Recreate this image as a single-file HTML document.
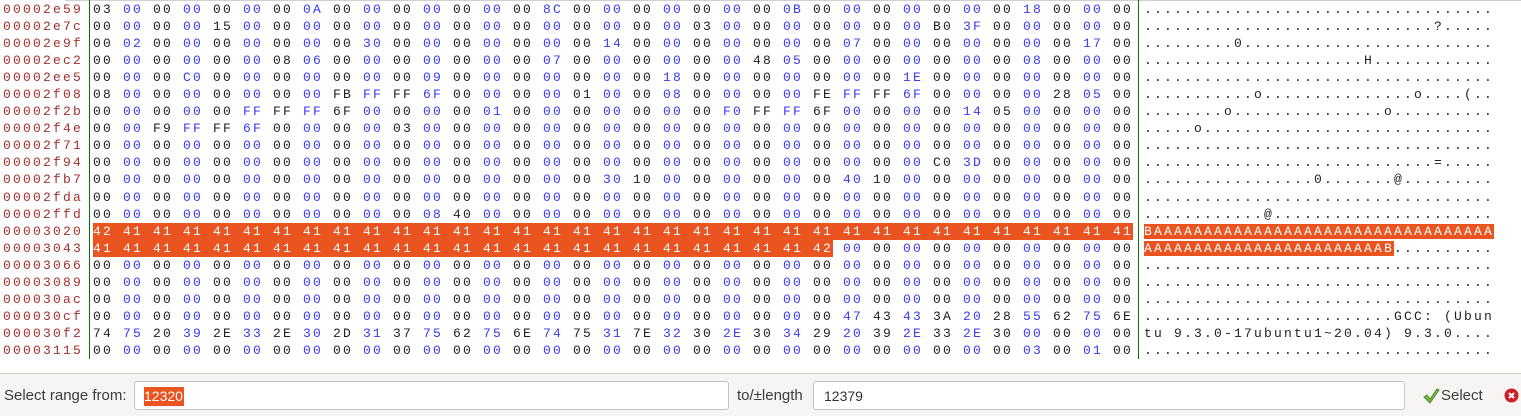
<!DOCTYPE html>
<html><head><meta charset="utf-8"><style>
html,body{margin:0;padding:0;background:#fff;width:1521px;height:416px;overflow:hidden;position:relative;font-family:"Liberation Sans",sans-serif}
.mono{position:absolute;top:1px;font:13px "Liberation Mono",monospace;letter-spacing:2.2px;line-height:17.05px}
.mono div{height:17.05px;white-space:nowrap}
.ad{left:3px;color:#a3302c}
.hx{left:93px}
.hx s,.hx u{text-decoration:none;display:inline-block;width:30px;color:#1e1e1e}
.hx div>:nth-child(even){color:#3a3af0}
u{text-decoration:none;background:#e95420;color:#fff!important}
.hx u.l{width:20px}
.as{left:1144px;color:#222}
.vl{position:absolute;top:0;width:1px;height:359px;background:#0a6e0a}
.top{position:absolute;top:0;left:65px;right:0;height:1px;background:#d0d0d0}
.bot{position:absolute;left:0;top:373px;width:1521px;height:43px;background:#f6f5f4;border-top:1px solid #cfcac6}
.lbl{position:absolute;top:387px;font-size:15px;color:#3c3c3c}
.inp{position:absolute;top:381px;height:29px;background:#fff;border:1px solid #c8c3be;border-radius:3px;box-sizing:border-box}
.iv{position:absolute;top:388px;font-size:14px;color:#333;line-height:16px}
</style></head><body>
<div class="top"></div>
<div class="vl" style="left:89px"></div>
<div class="vl" style="left:1138px"></div>
<div class="mono ad"><div>00002e59</div><div>00002e7c</div><div>00002e9f</div><div>00002ec2</div><div>00002ee5</div><div>00002f08</div><div>00002f2b</div><div>00002f4e</div><div>00002f71</div><div>00002f94</div><div>00002fb7</div><div>00002fda</div><div>00002ffd</div><div>00003020</div><div>00003043</div><div>00003066</div><div>00003089</div><div>000030ac</div><div>000030cf</div><div>000030f2</div><div>00003115</div></div>
<div class="mono hx">
<div><s>03</s><s>00</s><s>00</s><s>00</s><s>00</s><s>00</s><s>00</s><s>0A</s><s>00</s><s>00</s><s>00</s><s>00</s><s>00</s><s>00</s><s>00</s><s>8C</s><s>00</s><s>00</s><s>00</s><s>00</s><s>00</s><s>00</s><s>00</s><s>0B</s><s>00</s><s>00</s><s>00</s><s>00</s><s>00</s><s>00</s><s>00</s><s>18</s><s>00</s><s>00</s><s>00</s></div>
<div><s>00</s><s>00</s><s>00</s><s>00</s><s>15</s><s>00</s><s>00</s><s>00</s><s>00</s><s>00</s><s>00</s><s>00</s><s>00</s><s>00</s><s>00</s><s>00</s><s>00</s><s>00</s><s>00</s><s>00</s><s>03</s><s>00</s><s>00</s><s>00</s><s>00</s><s>00</s><s>00</s><s>00</s><s>B0</s><s>3F</s><s>00</s><s>00</s><s>00</s><s>00</s><s>00</s></div>
<div><s>00</s><s>02</s><s>00</s><s>00</s><s>00</s><s>00</s><s>00</s><s>00</s><s>00</s><s>30</s><s>00</s><s>00</s><s>00</s><s>00</s><s>00</s><s>00</s><s>00</s><s>14</s><s>00</s><s>00</s><s>00</s><s>00</s><s>00</s><s>00</s><s>00</s><s>07</s><s>00</s><s>00</s><s>00</s><s>00</s><s>00</s><s>00</s><s>00</s><s>17</s><s>00</s></div>
<div><s>00</s><s>00</s><s>00</s><s>00</s><s>00</s><s>00</s><s>08</s><s>06</s><s>00</s><s>00</s><s>00</s><s>00</s><s>00</s><s>00</s><s>00</s><s>07</s><s>00</s><s>00</s><s>00</s><s>00</s><s>00</s><s>00</s><s>48</s><s>05</s><s>00</s><s>00</s><s>00</s><s>00</s><s>00</s><s>00</s><s>00</s><s>08</s><s>00</s><s>00</s><s>00</s></div>
<div><s>00</s><s>00</s><s>00</s><s>C0</s><s>00</s><s>00</s><s>00</s><s>00</s><s>00</s><s>00</s><s>00</s><s>09</s><s>00</s><s>00</s><s>00</s><s>00</s><s>00</s><s>00</s><s>00</s><s>18</s><s>00</s><s>00</s><s>00</s><s>00</s><s>00</s><s>00</s><s>00</s><s>1E</s><s>00</s><s>00</s><s>00</s><s>00</s><s>00</s><s>00</s><s>00</s></div>
<div><s>08</s><s>00</s><s>00</s><s>00</s><s>00</s><s>00</s><s>00</s><s>00</s><s>FB</s><s>FF</s><s>FF</s><s>6F</s><s>00</s><s>00</s><s>00</s><s>00</s><s>01</s><s>00</s><s>00</s><s>08</s><s>00</s><s>00</s><s>00</s><s>00</s><s>FE</s><s>FF</s><s>FF</s><s>6F</s><s>00</s><s>00</s><s>00</s><s>00</s><s>28</s><s>05</s><s>00</s></div>
<div><s>00</s><s>00</s><s>00</s><s>00</s><s>00</s><s>FF</s><s>FF</s><s>FF</s><s>6F</s><s>00</s><s>00</s><s>00</s><s>00</s><s>01</s><s>00</s><s>00</s><s>00</s><s>00</s><s>00</s><s>00</s><s>00</s><s>F0</s><s>FF</s><s>FF</s><s>6F</s><s>00</s><s>00</s><s>00</s><s>00</s><s>14</s><s>05</s><s>00</s><s>00</s><s>00</s><s>00</s></div>
<div><s>00</s><s>00</s><s>F9</s><s>FF</s><s>FF</s><s>6F</s><s>00</s><s>00</s><s>00</s><s>00</s><s>03</s><s>00</s><s>00</s><s>00</s><s>00</s><s>00</s><s>00</s><s>00</s><s>00</s><s>00</s><s>00</s><s>00</s><s>00</s><s>00</s><s>00</s><s>00</s><s>00</s><s>00</s><s>00</s><s>00</s><s>00</s><s>00</s><s>00</s><s>00</s><s>00</s></div>
<div><s>00</s><s>00</s><s>00</s><s>00</s><s>00</s><s>00</s><s>00</s><s>00</s><s>00</s><s>00</s><s>00</s><s>00</s><s>00</s><s>00</s><s>00</s><s>00</s><s>00</s><s>00</s><s>00</s><s>00</s><s>00</s><s>00</s><s>00</s><s>00</s><s>00</s><s>00</s><s>00</s><s>00</s><s>00</s><s>00</s><s>00</s><s>00</s><s>00</s><s>00</s><s>00</s></div>
<div><s>00</s><s>00</s><s>00</s><s>00</s><s>00</s><s>00</s><s>00</s><s>00</s><s>00</s><s>00</s><s>00</s><s>00</s><s>00</s><s>00</s><s>00</s><s>00</s><s>00</s><s>00</s><s>00</s><s>00</s><s>00</s><s>00</s><s>00</s><s>00</s><s>00</s><s>00</s><s>00</s><s>00</s><s>C0</s><s>3D</s><s>00</s><s>00</s><s>00</s><s>00</s><s>00</s></div>
<div><s>00</s><s>00</s><s>00</s><s>00</s><s>00</s><s>00</s><s>00</s><s>00</s><s>00</s><s>00</s><s>00</s><s>00</s><s>00</s><s>00</s><s>00</s><s>00</s><s>00</s><s>30</s><s>10</s><s>00</s><s>00</s><s>00</s><s>00</s><s>00</s><s>00</s><s>40</s><s>10</s><s>00</s><s>00</s><s>00</s><s>00</s><s>00</s><s>00</s><s>00</s><s>00</s></div>
<div><s>00</s><s>00</s><s>00</s><s>00</s><s>00</s><s>00</s><s>00</s><s>00</s><s>00</s><s>00</s><s>00</s><s>00</s><s>00</s><s>00</s><s>00</s><s>00</s><s>00</s><s>00</s><s>00</s><s>00</s><s>00</s><s>00</s><s>00</s><s>00</s><s>00</s><s>00</s><s>00</s><s>00</s><s>00</s><s>00</s><s>00</s><s>00</s><s>00</s><s>00</s><s>00</s></div>
<div><s>00</s><s>00</s><s>00</s><s>00</s><s>00</s><s>00</s><s>00</s><s>00</s><s>00</s><s>00</s><s>00</s><s>08</s><s>40</s><s>00</s><s>00</s><s>00</s><s>00</s><s>00</s><s>00</s><s>00</s><s>00</s><s>00</s><s>00</s><s>00</s><s>00</s><s>00</s><s>00</s><s>00</s><s>00</s><s>00</s><s>00</s><s>00</s><s>00</s><s>00</s><s>00</s></div>
<div><u>42</u><u>41</u><u>41</u><u>41</u><u>41</u><u>41</u><u>41</u><u>41</u><u>41</u><u>41</u><u>41</u><u>41</u><u>41</u><u>41</u><u>41</u><u>41</u><u>41</u><u>41</u><u>41</u><u>41</u><u>41</u><u>41</u><u>41</u><u>41</u><u>41</u><u>41</u><u>41</u><u>41</u><u>41</u><u>41</u><u>41</u><u>41</u><u>41</u><u>41</u><u class="l">41</u></div>
<div><u>41</u><u>41</u><u>41</u><u>41</u><u>41</u><u>41</u><u>41</u><u>41</u><u>41</u><u>41</u><u>41</u><u>41</u><u>41</u><u>41</u><u>41</u><u>41</u><u>41</u><u>41</u><u>41</u><u>41</u><u>41</u><u>41</u><u>41</u><u>41</u><u class="l">42</u><s style="margin-left:10px">00</s><s>00</s><s>00</s><s>00</s><s>00</s><s>00</s><s>00</s><s>00</s><s>00</s><s>00</s></div>
<div><s>00</s><s>00</s><s>00</s><s>00</s><s>00</s><s>00</s><s>00</s><s>00</s><s>00</s><s>00</s><s>00</s><s>00</s><s>00</s><s>00</s><s>00</s><s>00</s><s>00</s><s>00</s><s>00</s><s>00</s><s>00</s><s>00</s><s>00</s><s>00</s><s>00</s><s>00</s><s>00</s><s>00</s><s>00</s><s>00</s><s>00</s><s>00</s><s>00</s><s>00</s><s>00</s></div>
<div><s>00</s><s>00</s><s>00</s><s>00</s><s>00</s><s>00</s><s>00</s><s>00</s><s>00</s><s>00</s><s>00</s><s>00</s><s>00</s><s>00</s><s>00</s><s>00</s><s>00</s><s>00</s><s>00</s><s>00</s><s>00</s><s>00</s><s>00</s><s>00</s><s>00</s><s>00</s><s>00</s><s>00</s><s>00</s><s>00</s><s>00</s><s>00</s><s>00</s><s>00</s><s>00</s></div>
<div><s>00</s><s>00</s><s>00</s><s>00</s><s>00</s><s>00</s><s>00</s><s>00</s><s>00</s><s>00</s><s>00</s><s>00</s><s>00</s><s>00</s><s>00</s><s>00</s><s>00</s><s>00</s><s>00</s><s>00</s><s>00</s><s>00</s><s>00</s><s>00</s><s>00</s><s>00</s><s>00</s><s>00</s><s>00</s><s>00</s><s>00</s><s>00</s><s>00</s><s>00</s><s>00</s></div>
<div><s>00</s><s>00</s><s>00</s><s>00</s><s>00</s><s>00</s><s>00</s><s>00</s><s>00</s><s>00</s><s>00</s><s>00</s><s>00</s><s>00</s><s>00</s><s>00</s><s>00</s><s>00</s><s>00</s><s>00</s><s>00</s><s>00</s><s>00</s><s>00</s><s>00</s><s>47</s><s>43</s><s>43</s><s>3A</s><s>20</s><s>28</s><s>55</s><s>62</s><s>75</s><s>6E</s></div>
<div><s>74</s><s>75</s><s>20</s><s>39</s><s>2E</s><s>33</s><s>2E</s><s>30</s><s>2D</s><s>31</s><s>37</s><s>75</s><s>62</s><s>75</s><s>6E</s><s>74</s><s>75</s><s>31</s><s>7E</s><s>32</s><s>30</s><s>2E</s><s>30</s><s>34</s><s>29</s><s>20</s><s>39</s><s>2E</s><s>33</s><s>2E</s><s>30</s><s>00</s><s>00</s><s>00</s><s>00</s></div>
<div><s>00</s><s>00</s><s>00</s><s>00</s><s>00</s><s>00</s><s>00</s><s>00</s><s>00</s><s>00</s><s>00</s><s>00</s><s>00</s><s>00</s><s>00</s><s>00</s><s>00</s><s>00</s><s>00</s><s>00</s><s>00</s><s>00</s><s>00</s><s>00</s><s>00</s><s>00</s><s>00</s><s>00</s><s>00</s><s>00</s><s>00</s><s>03</s><s>00</s><s>01</s><s>00</s></div>
</div>
<div class="mono as">
<div>...................................</div>
<div>.............................?.....</div>
<div>.........0.........................</div>
<div>......................H............</div>
<div>...................................</div>
<div>...........o...............o....(..</div>
<div>........o...............o..........</div>
<div>.....o.............................</div>
<div>...................................</div>
<div>.............................=.....</div>
<div>.................0.......@.........</div>
<div>...................................</div>
<div>............@......................</div>
<div><u>BAAAAAAAAAAAAAAAAAAAAAAAAAAAAAAAAAA</u></div>
<div><u>AAAAAAAAAAAAAAAAAAAAAAAAB</u>..........</div>
<div>...................................</div>
<div>...................................</div>
<div>...................................</div>
<div>.........................GCC: (Ubun</div>
<div>tu 9.3.0-17ubuntu1~20.04) 9.3.0....</div>
<div>...................................</div>
</div>
<div class="bot"></div>
<div class="lbl" style="left:4px">Select range from:</div>
<div class="inp" style="left:134px;width:595px"></div>
<div class="iv" style="left:144px;top:387px;background:#e95420;color:#fff;padding:1px 1px 2px 0">12320</div>
<div class="lbl" style="left:737px">to/±length</div>
<div class="inp" style="left:813px;width:592px"></div>
<div class="iv" style="left:824px">12379</div>
<svg style="position:absolute;left:1422px;top:387px" width="18" height="18" viewBox="0 0 18 18"><path d="M2 10 L5 8 L8 12 L15 2 L17 3 L8 16 Z" fill="#7ab648" stroke="#4e8a2a" stroke-width="1"/></svg>
<div class="lbl" style="left:1441px">Select</div>
<svg style="position:absolute;left:1504px;top:388px" width="15" height="15" viewBox="0 0 15 15"><circle cx="7.5" cy="7.5" r="7" fill="#cc1f26"/><path d="M5 5 L10 10 M10 5 L5 10" stroke="#fff" stroke-width="2"/></svg>
</body></html>
